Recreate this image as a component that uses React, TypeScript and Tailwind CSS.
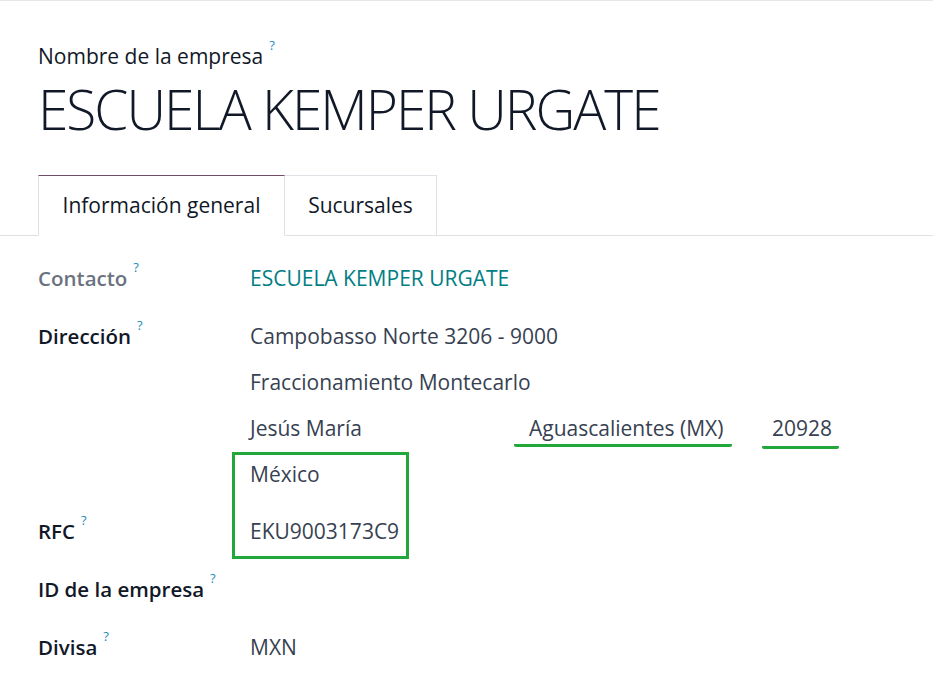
import type { ReactNode } from "react";

function Help() {
  return (
    <sup className="ml-[6px] align-super text-[13px] font-normal text-[#1b8db8]">?</sup>
  );
}

function Row({
  label,
  muted,
  tight,
  children,
}: {
  label: string;
  muted?: boolean;
  tight?: boolean;
  children?: ReactNode;
}) {
  return (
    <div className={"grid grid-cols-[212px_1fr] " + (tight ? "mb-[29px]" : "mb-[30px]")}>
      <div
        className={
          "h-[28px] leading-[28px] text-[20.5px] font-semibold " +
          (muted ? "text-[#6b7280]" : "text-[#111827]")
        }
      >
        {label}
        <Help />
      </div>
      <div className="min-h-[28px] leading-[28px] text-[#374151]">{children}</div>
    </div>
  );
}

export default function App() {
  return (
    <div className="min-h-screen bg-white border-t border-[#e5e7eb] font-['Open_Sans',sans-serif] text-[21px]">
      <div className="px-[38px] pt-[40px]">
        <div className="h-[30px] leading-[30px] text-[21px] text-[#111827]">
          Nombre de la empresa
          <Help />
        </div>
        <h1 className="mt-[6px] h-[64px] leading-[64px] text-[55px] font-light text-[#111827] tracking-[-2px]">
          ESCUELA KEMPER URGATE
        </h1>
      </div>

      <div className="mt-[34px] flex border-b border-[#dee2e6] pl-[38px]">
        <div className="-mb-px h-[61px] w-[247px] flex items-center justify-center border border-[#dee2e6] border-t-[#714b67] border-b-white bg-white text-[#111827]">
          Información general
        </div>
        <div className="-mb-px h-[61px] w-[152px] flex items-center justify-center border border-l-0 border-[#dee2e6] border-b-[#dee2e6] text-[#111827]">
          Sucursales
        </div>
      </div>

      <div className="relative px-[38px] pt-[28px]">
        <Row label="Contacto" muted>
          <span className="text-[#017e84]">ESCUELA KEMPER URGATE</span>
        </Row>
        <Row label="Dirección" tight>
          <div className="flex flex-col gap-[18px]">
            <div>Campobasso Norte 3206 - 9000</div>
            <div>Fraccionamiento Montecarlo</div>
            <div className="flex h-[28px]">
              <div className="w-[264px]">Jesús María</div>
              <div className="w-[248px]">
                <span className="inline-block h-[33px] rounded-[2px] border-b-[3px] border-[#22a83a] pl-[15px] pr-[9px]">
                  Aguascalientes (MX)
                </span>
              </div>
              <div>
                <span className="inline-block h-[35px] rounded-[2px] border-b-[3px] border-[#22a83a] pl-[10px] pr-[7px]">
                  20928
                </span>
              </div>
            </div>
            <div>México</div>
          </div>
        </Row>
        <Row label="RFC">EKU9003173C9</Row>
        <Row label="ID de la empresa" />
        <Row label="Divisa">MXN</Row>

        <div className="pointer-events-none absolute left-[232px] top-[216px] h-[107px] w-[177px] border-[3px] border-[#22a83a]" />
      </div>
    </div>
  );
}
